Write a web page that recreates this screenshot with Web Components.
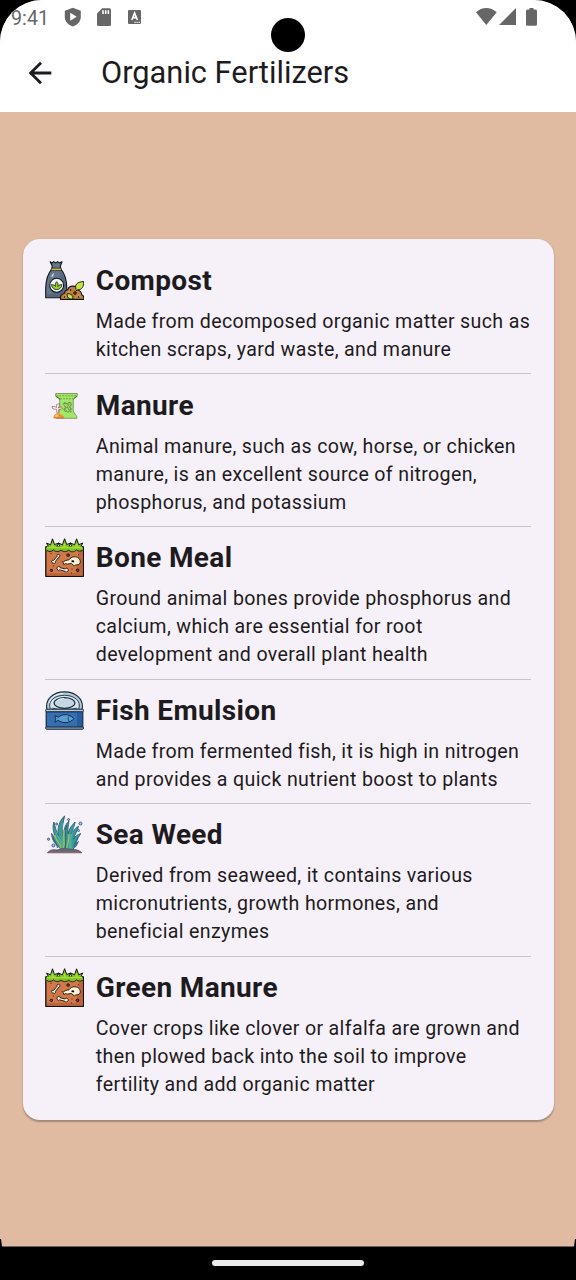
<!DOCTYPE html>
<html lang="en">
<head>
<meta charset="utf-8">
<title>Organic Fertilizers</title>
<style>
html,body{margin:0;background:#000;font-family:Roboto,sans-serif}
</style>
</head>
<body>
<phone-screen>
  <status-bar slot="top" time="9:41"></status-bar>
  <app-bar slot="top">Organic Fertilizers</app-bar>
  <info-card>
    <fertilizer-item icon="compost"><span slot="title">Compost</span>Made from decomposed organic matter such as<br>kitchen scraps, yard waste, and manure</fertilizer-item>
    <fertilizer-item icon="manure"><span slot="title">Manure</span>Animal manure, such as cow, horse, or chicken<br>manure, is an excellent source of nitrogen,<br>phosphorus, and potassium</fertilizer-item>
    <fertilizer-item icon="soil"><span slot="title">Bone Meal</span>Ground animal bones provide phosphorus and<br>calcium, which are essential for root<br>development and overall plant health</fertilizer-item>
    <fertilizer-item icon="fish"><span slot="title">Fish Emulsion</span>Made from fermented fish, it is high in nitrogen<br>and provides a quick nutrient boost to plants</fertilizer-item>
    <fertilizer-item icon="seaweed"><span slot="title">Sea Weed</span>Derived from seaweed, it contains various<br>micronutrients, growth hormones, and<br>beneficial enzymes</fertilizer-item>
    <fertilizer-item icon="soil" last><span slot="title">Green Manure</span>Cover crops like clover or alfalfa are grown and<br>then plowed back into the soil to improve<br>fertility and add organic matter</fertilizer-item>
  </info-card>
</phone-screen>
<script>
const define = (name, render) => customElements.define(name, class extends HTMLElement {
  connectedCallback() {
    if (!this.shadowRoot) this.attachShadow({ mode: 'open' }).innerHTML = render(this);
  }
});

const icons = {
  compost: `<g stroke="#10151c" stroke-width="1.1" stroke-linejoin="round">
    <path fill="#64758a" d="M5.200.8l2 1.100 1.500-1.300 2 1.300 2-1.300 1.500 1.300 2.800-1.100-1.600 4.200.4 3.200c3.600 3.800 5.700 9.600 6 18.800v9.700H.7V27C1 18 3 12.500 6.800 8.200L7.200 5z"/>
    <path stroke="none" fill="#56677d" d="M14.500 9c4 5 6.300 10 6.500 18v9H1.400v-3C12 35 18 26 14.500 9z"/>
    <path stroke="none" fill="#cfdbe6" d="M5.900 15.500l2.200-3.300 1 .5-1.500 3.300z"/>
    <rect x="6.200" y="7.200" width="10.200" height="2.100" rx=".8" fill="#e8d94c" stroke-width=".7"/>
    <circle cx="11.700" cy="24.300" r="7" fill="#eef5f5"/>
    <path fill="#9bcf28" stroke-width=".8" d="M11.700 28.600c-2.700 0-4.800-1.800-5.300-5 2 .1 3.300.7 4 1.800-.4-1.800.1-3.400 1.300-4.700 1.200 1.300 1.700 2.900 1.300 4.700.7-1.100 2-1.700 4-1.800-.5 3.200-2.600 5-5.300 5z"/>
    <path fill="#bd803f" d="M15.600 38.400c-.5-3 1-5.200 3.500-5.800.4-2.300 2-3.600 3.700-3.900.6-2.200 2.200-3.600 5-3.600 2.500 0 4.500 1.500 5 4 2.500.7 3.700 2.300 3.900 4.600 1.900.7 2.500 2.500 2.200 4.700z"/>
    <path stroke="none" fill="#d18d49" d="M18 37.500c0-2.500 1.500-3.800 4-4 .2-3 1.700-4 4-4.200l-4.500 8.200zM30 37.500l2.800-5 3.700 3z"/>
    <path fill="#c5e43e" stroke-width=".9" d="M31.200 28.600c-1.900-4.800.5-7.500 7.400-8.100.3 5.500-1.800 8.300-5.600 8.200l-2.200 1.200M22.300 32.500c4.500.4 6.300 2.600 5.400 5.400-4 .8-6-1.500-5.400-5.400z"/>
    <circle cx="30" cy="32" r="1.500" fill="#6f2c15" stroke-width=".6"/><g stroke="none"><circle cx="25.600" cy="29" r=".7"/><circle cx="33.500" cy="36" r=".7"/><circle cx="19.500" cy="36" r=".7"/></g></g>`,
  manure: `<g stroke-linejoin="round">
    <path fill="#a0e967" stroke="#66734b" stroke-width=".7" d="M10.700 7.500h21.500v2.800l-3.900 2.900v10.500c0 2.900 1.500 3.500 3.500 6.800v1.800H11.500v-2c2.400-3.300 3.200-4.900 3.200-8V13l-4-2.700z"/>
    <path d="M11.200 9.800h20.600M15 12.800h13" stroke="#657b45" stroke-width=".7" stroke-dasharray="2 1"/>
    <path d="M10.800 10.200l4.500 3M32 10.200l-3.500 2.700" stroke="#4e6b36"/>
    <path fill="none" stroke="#72984e" stroke-width="1.100" d="M18 18.500l2-2 2 1.500 3-2 1.500 2.500-2 2.500 2 2-2.800 3-3.200-.5-1.800-2 2.500-2-2.200-2m4.500-1.500l-1 3.500 2 3"/>
    <path d="M19 17.200l1.500 1M24.500 18.500l1 .8M20.500 23.500l1 1M25 25.800h1.500" stroke="#92626e"/>
    <path fill="#fff" stroke="#8f584f" stroke-width=".7" d="M12 27l-.5-3.700-3.600-.4-1-2.300 3.200.1 1.400 1 .2-3.200 3-1-.8 3.500-1 1.200 3.700-1.300 1 1.700-3.900 1-.6 3.500"/>
    <path fill="#ed9a40" d="M8.500 32c0-2 .7-3.500 2.300-4 1.500-1.500 3.500-1.500 4.600 0 2 .6 3.600 2 3.900 4z"/>
    <path fill="#ffc56b" d="M9.500 30.200l2-1.700 2 .5-1 2z"/>
    <path d="M8.700 32h10.500M14 29.700h.8m2 .8h.7" stroke="#b96337" stroke-width=".7"/></g>`,
  soil: `<g stroke="#14120f" stroke-linejoin="round">
    <path fill="#d0784a" stroke-width="1.300" d="M.8 9h37.600v29.300H.8z"/>
    <path fill="#bd643a" stroke="none" d="M34.500 12h3.200v25.600H2v-2.500h29z"/>
    <path fill="#7bc329" stroke="none" d="M1.200 8.500h36.700v3.800c-2.600 1.300-4.700 1-6.600-.4-2.400 2.400-5 2.500-7.600.3-2.600 2-5.200 1.900-7.700-.1-2.600 2-5.100 2-7.500-.1-2.400 1.900-4.900 2-7.300.2z"/>
    <path fill="none" stroke-width=".9" d="M1.400 12.200c2.400 1.800 4.800 1.700 7.100-.2 2.400 2.100 4.900 2.100 7.500.1 2.500 2 5.100 2.100 7.700.1 2.600 2.200 5.200 2.100 7.600-.3 1.900 1.400 4 1.700 6.600.4"/>
    <path fill="#7bc329" stroke-width="1" d="M.8 8.800h2.700L1.600 5.100l4 1.700L7.500.8l2 5.700 4-1.300-1.900 3.600h3.200L13.400 5l4 1.800L19.600.7l2.100 5.800 4-1.500-1.900 3.800h3L25.400 5l4.200 1.700L31.600.8l2.100 5.900 4-1.700-1.900 3.800h2.600"/>
    <path stroke="#a4df32" fill="none" stroke-width="1.800" d="M2 9.300h35M7.500 5.500v4M19.600 5.500v4M31.600 5.500v4"/>
    <path fill="#fff0d9" stroke-width=".9" d="M6.600 23.100c.5-1 1.400-1 2-.6l3.500-4.300c-.4-1.400.9-2.500 1.900-1.600 1.200.1 1.300 1.800.1 2.200l-3.700 4.700c.5 1.300-.6 2.400-1.600 1.700-1.200.2-2.500-.8-2.200-2.100zM12.900 28.700c1.100-.8 2.300.1 2.100 1l5.300 1.300c.7-1.300 2.200-1 2.400.1 1.200.7.7 2.100-.4 2.200-.6 1.200-2 1.100-2.400-.1l-5.400-1.300c-.8 1.100-2.200.6-2-.6-.9-.8-.7-2 .4-2.600z"/>
    <path fill="#fff0d9" stroke-width=".9" d="M18.800 26.500l-.7-2.200c1-1.600 3.500-2.200 5.800-2.400 1.500-2.100 3.600-3.300 6.200-3.100 3.500.2 5.700 3 5.100 6-.8 1.600-2.500 2.200-4.400 2.100l-1.600 1-2.900-2.500-4.200.8-1.400-.7z"/>
    <path stroke="none" d="M26 23.300c1.300-1.500 3-1.100 3.200.2 0 1.200-1.800 1.300-3.200-.2z"/>
    <path fill="#8c482c" stroke-width=".9" d="M22.500 15.800l1.700.3.200 1.800-1.800.5-1-1.300zM32 31l1.600.3.200 1.800-1.800.5-1-1.300zM5.700 31.300l1.700.3v1.600l-1.500.4-1-1.200z"/>
    <path fill="none" stroke-width=".8" d="M6 15v1M33.500 16.200v1M8 28h1M17.200 23v1M27 30.500v1M26 35h1"/></g>`,
  fish: `<g stroke="#1b2e40" stroke-width="1.200" stroke-linejoin="round">
    <path fill="#b8cbd8" d="M2 18.500C-.3 8.500 8.200.8 19.500.8S39.300 8.500 37 18.500z"/>
    <path fill="#d5e4ed" stroke-width=".9" d="M5.300 18.200C2.200 9.400 10.200 4.300 19.500 4.300s17.300 5.100 14.200 13.900z"/>
    <ellipse cx="19.500" cy="12" rx="10.400" ry="5.300" fill="#c6d7e3"/>
    <path fill="none" stroke="#eef8fc" stroke-width="1" d="M4 12C6 6 11 3 18 2.500M11 11c1-2.300 4.500-3.500 8-3.500"/>
    <path fill="none" stroke-width=".9" d="M7.500 17c6 2.800 18.500 2.800 24 0"/>
    <path fill="#285c9e" d="M1.200 20h36.600v16.500H1.200z"/>
    <path fill="#356fb0" stroke="none" d="M2 22h30v13.500H2z"/>
    <rect x=".7" y="18.200" width="37.800" height="2.500" rx="1" fill="#bdcbd6" stroke-width="1"/>
    <rect x=".7" y="36" width="37.800" height="2.300" rx="1" fill="#8198b0" stroke-width="1"/>
    <path fill="#5a9dd5" stroke-width="1" d="M9.800 24.500l3.500 1.700c4-3.600 11.500-3.600 15.500 1.500-4 4.900-11.500 4.900-15.500 1.600l-3.500 2 1-3.500z"/>
    <path fill="none" stroke-width=".8" d="M24 25.300c-1.200 1.700-1.200 3.200 0 4.700"/></g>`,
  seaweed: `<g stroke="#245064" stroke-width=".8" stroke-linejoin="round">
    <path fill="#399ba0" d="M17 35C10 29 7 26 6.600 18.500c2 2.500 3 5 5 7C8.500 18 7 12 9 7c1.300 5 2 9 4.500 14C12 14 14 6 19.700.8 18 8 16.500 14 18 21c1.200-6 1.500-11 6-15-.6 5-1.500 8-1 13 .8-5 4-9 7.200-12-.6 4-2.800 7-3.400 12 1.500-3 3.200-6 6.700-7.800-.7 5-4 8-5 13 1.500-2.700 4-4.700 7.300-5.700-2 4-5 6.500-5.800 10.500l3.500-2.500c-1.500 4-4 6.500-6.500 8.500z"/>
    <path fill="#4bb29d" stroke="none" d="M18 33c-3-6-6-11-9-21 2 6 6 11 8 15 0-8-1-14 1-21-1 9-1 17 1 27zM24 34c0-7 0-12 5-20-3 8-3 14-2 19z"/>
    <path fill="none" stroke="#a2bb54" stroke-width="1.500" d="M18.500 33c2-6-1-10 .7-18M22 33c0-6 3-8 2-14M10 20c0 6 6 8 6 13"/>
    <path fill="none" stroke="#285f75" stroke-width="1" d="M12.500 33C12 28 9 26 8 22M20 33c2-9-1-15 2-23M29 32c1-4 3-6 4-9"/>
    <path fill="#706574" stroke="#554e60" d="M2.500 37.800c2-3 5.500-3.500 9.500-2.800 4-1.600 10-1.500 15-.4 4-.4 7.500.7 9.700 3.200z"/>
    <path d="M4 37.500h31" stroke="#917071"/>
    <g fill="#a8c8e5" stroke="#425884" stroke-width="1"><circle cx="35.500" cy="8.500" r="1.500"/><circle cx="23.600" cy="4.600" r="1"/><circle cx="11.700" cy="9" r="1"/><circle cx="33.500" cy="15.500" r="1"/><circle cx="3.600" cy="24.200" r="1.100"/><circle cx="8.400" cy="30.500" r="1.500"/><circle cx="30.700" cy="30" r=".9"/></g></g>`
};

define('phone-screen', () => `<style>
  :host{display:grid;grid-template-rows:1246.500px 33.500px;width:576px;height:1280px;background:#000;position:relative;overflow:hidden}
  .view{background:#e0baa1;display:flex;flex-direction:column;border-radius:42px 42px 0 0;overflow:hidden;clip-path:polygon(0 0,100% 0,100% 1239px,575px 1239px,574px 100%,2px 100%,1px 1239px,0 1239px)}
  header{height:112px;background:#fff;flex:none;display:flex;flex-direction:column}
  main{flex:1;display:flex;flex-direction:column;align-items:center;justify-content:center;padding-top:.6px}
  nav{display:flex;justify-content:center;align-items:center}
  nav i{width:152px;height:6px;border-radius:3px;background:#ebebeb}
  .camera{position:absolute;left:271px;top:18px;width:34px;height:34px;border-radius:50%;background:#000}
</style><div class="view"><header><slot name="top"></slot></header><main><slot></slot></main></div><nav><i></i></nav><div class="camera"></div>`);

define('status-bar', el => `<style>
  :host{display:flex;justify-content:space-between;height:34px;padding:0 36px 0 11px;color:#666}
  .group{display:flex;align-items:center} .time{font-size:19.600px;line-height:34px;width:47px;padding-top:3px;letter-spacing:.1px}
  svg{display:block;fill:#666}
</style><div class="group"><span class="time">${el.getAttribute('time')}</span>
<svg width="84" height="34" viewBox="58 0 84 34"><path d="M72.800 7.800l8 3v6c0 4.700-3.300 8.300-8 9.700-4.700-1.400-8-5-8-9.700v-6z"/><path fill="#fff" d="M70.200 12.800v8l6.500-4z"/><path d="M102.200 8.200h7.300q1.500 0 1.500 1.500v14.700q0 1.500-1.500 1.500H98.500q-1.500 0-1.500-1.500V13.500z"/><path fill="#fff" d="M102.200 10.200h1.600v3.700h-1.600zm2.700 0h1.600v3.700h-1.600zm2.700 0h1.600v3.700h-1.600z"/><rect x="128" y="10" width="13" height="14" rx="1"/><path fill="none" stroke="#fff" stroke-width="1.600" d="M131.800 20l2.800-7 2.800 7m-4.800-2.400h4"/><path fill="#fff" d="M134.500 21.700h1.200v1.200h-1.200zm2.100 0h1.200v1.200h-1.200zm2.100 0h1.200v1.200h-1.200z"/></svg></div>
<svg width="68" height="34" viewBox="472 0 68 34"><path d="M476 12.300c6-5.900 14.700-5.900 20.700 0L486.300 25zM516 8v17h-17zM529.500 8h4v1.500h2q1.500 0 1.500 1.500v13.200q0 1.500-1.500 1.500h-8q-1.500 0-1.500-1.500V11q0-1.500 1.500-1.500h2z"/></svg>`);

define('app-bar', () => `<style>
  :host{display:flex;height:78px;align-items:center;color:#1d1b20;font-size:30.800px;line-height:39px}
  svg{width:34px;height:34px;margin:0 44.300px 0 22.700px;flex:none}
  span{white-space:nowrap;padding-bottom:1px}
</style><svg viewBox="0 0 24 24"><path fill="#1d1b20" d="M20 11H7.830l5.590-5.590L12 4l-8 8 8 8 1.410-1.410L7.830 13H20v-2z"/></svg><span><slot></slot></span>`);

define('info-card', () => `<style>
  :host{display:block;box-sizing:border-box;width:531px;padding:11.200px 22.400px;background:#f6f1f9;border-radius:16.800px;box-shadow:0 1.400px 1.500px rgba(0,0,0,.22),0 1px 3px rgba(0,0,0,.1)}
</style><slot></slot>`);

define('fertilizer-item', el => `<style>
  :host{display:grid;grid-template-columns:39.200px 1fr;column-gap:11.700px;padding-top:11.200px;color:#1d1b20}
  svg{width:39.200px;height:39.200px;display:block;grid-row:1}
  h2{margin:0;font-size:28px;font-weight:700;line-height:40.200px;height:39.200px;letter-spacing:.350px}
  p{grid-column:2;margin:8px 0 9.200px;font-size:19.600px;line-height:28px;letter-spacing:.350px;white-space:nowrap}
  hr{grid-column:1/-1;margin:0;border:0;width:100%;height:1px;background:${el.hasAttribute('last') ? 'transparent' : '#c8c3cd'}}
</style><svg viewBox="0 0 39.200 39.200">${icons[el.getAttribute('icon')]}</svg><h2><slot name="title"></slot></h2><p><slot></slot></p><hr>`);
</script>
</body>
</html>
